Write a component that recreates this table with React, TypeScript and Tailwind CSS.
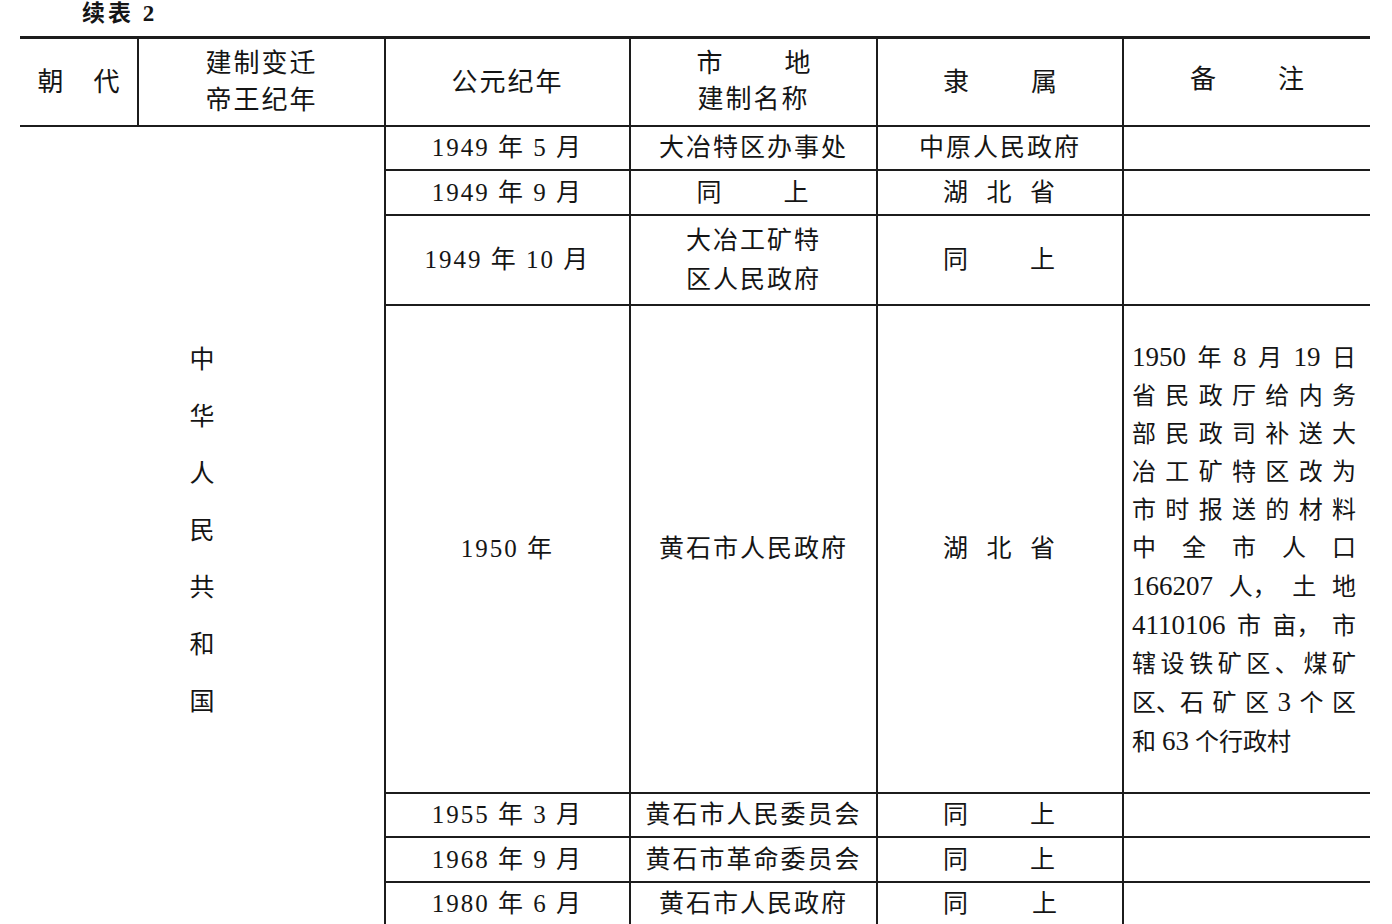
import React from "react";

const FONT = "'Liberation Serif', 'Noto Sans CJK SC', serif";

function Spread({ items, className }: { items: string[]; className: string }) {
  return (
    <div className={"flex justify-between items-baseline " + className}>
      {items.map((t, i) => (
        <span key={i} className={/^\d+$/.test(t) ? "text-[27px]" : ""}>
          {t}
        </span>
      ))}
    </div>
  );
}

const remarkLines: string[][] = [
  ["1950", "年", "8", "月", "19", "日"],
  "省民政厅给内务".split(""),
  "部民政司补送大".split(""),
  "冶工矿特区改为".split(""),
  "市时报送的材料".split(""),
  "中全市人口".split(""),
  ["166207", "人，", "土", "地"],
  ["4110106", "市", "亩，", "市"],
  "辖设铁矿区、煤矿".split(""),
  ["区、石", "矿", "区", "3", "个", "区"],
];

export default function App() {
  const cell = "flex items-center justify-center border-[#1c1c1c]";
  const data = cell + " border-b-2 border-r-2 text-[25px] tracking-[2px]";
  const dataLast = cell + " border-b-2 text-[25px]";
  return (
    <div
      className="w-[1392px] h-[924px] overflow-hidden bg-white text-[#151515]"
      style={{ fontFamily: FONT }}
    >
      <div className="h-[36px] pl-[82px] text-[23px] font-bold leading-[28px] tracking-[3px]">续表 2</div>
      <div className="ml-[20px] w-[1350px] border-t-[3px] border-[#1c1c1c] grid grid-cols-[119px_247px_245px_247px_246px_246px] grid-rows-[88px_44px_45px_90px_488px_44px_45px_50px]">
        {/* header */}
        <div className={cell + " border-b-2 border-r-2 text-[26px] gap-[30px]"}>
          <span>朝</span>
          <span>代</span>
        </div>
        <div className={cell + " border-b-2 border-r-2 flex-col text-[26px] leading-[37px] tracking-[2px]"}>
          <span>建制变迁</span>
          <span>帝王纪年</span>
        </div>
        <div className={cell + " border-b-2 border-r-2 text-[26px] tracking-[2px]"}>公元纪年</div>
        <div className={cell + " border-b-2 border-r-2 flex-col text-[26px] leading-[36px]"}>
          <Spread items={["市", "地"]} className="w-[114px]" />
          <span className="tracking-[2px]">建制名称</span>
        </div>
        <div className={cell + " border-b-2 border-r-2 text-[26px]"}>
          <Spread items={["隶", "属"]} className="w-[114px]" />
        </div>
        <div className={cell + " border-b-2 text-[26px] pb-[6px]"}>
          <Spread items={["备", "注"]} className="w-[114px]" />
        </div>

        {/* merged left */}
        <div className={cell + " col-span-2 row-span-7 border-r-2 flex-col text-[25px] leading-[57px]"}>
          {"中华人民共和国".split("").map((c, i) => (
            <span key={i}>{c}</span>
          ))}
        </div>

        {/* row 1 */}
        <div className={data}>1949 年 5 月</div>
        <div className={data}>大冶特区办事处</div>
        <div className={data}>中原人民政府</div>
        <div className={dataLast}></div>

        {/* row 2 */}
        <div className={data}>1949 年 9 月</div>
        <div className={data}>
          <Spread items={["同", "上"]} className="w-[114px]" />
        </div>
        <div className={data}>
          <Spread items={["湖", "北", "省"]} className="w-[114px]" />
        </div>
        <div className={dataLast}></div>

        {/* row 3 */}
        <div className={data}>1949 年 10 月</div>
        <div className={data + " flex-col leading-[39px]"}>
          <span>大冶工矿特</span>
          <span>区人民政府</span>
        </div>
        <div className={data}>
          <Spread items={["同", "上"]} className="w-[114px]" />
        </div>
        <div className={dataLast}></div>

        {/* row 4 */}
        <div className={data}>1950 年</div>
        <div className={data}>黄石市人民政府</div>
        <div className={data}>
          <Spread items={["湖", "北", "省"]} className="w-[114px]" />
        </div>
        <div className={"flex flex-col justify-center border-b-2 border-[#1c1c1c] pl-[8px] text-[24px] leading-[38px]"}>
          <div className="w-[224px]">
            {remarkLines.map((l, i) => (
              <Spread key={i} items={l} className="" />
            ))}
            <div>
              和 <span className="text-[27px]">63</span> 个行政村
            </div>
          </div>
        </div>

        {/* row 5 */}
        <div className={data}>1955 年 3 月</div>
        <div className={data + " tracking-[1px]"}>黄石市人民委员会</div>
        <div className={data}>
          <Spread items={["同", "上"]} className="w-[114px]" />
        </div>
        <div className={dataLast}></div>

        {/* row 6 */}
        <div className={data}>1968 年 9 月</div>
        <div className={data + " tracking-[1px]"}>黄石市革命委员会</div>
        <div className={data}>
          <Spread items={["同", "上"]} className="w-[114px]" />
        </div>
        <div className={dataLast}></div>

        {/* row 7 */}
        <div className={cell + " border-r-2 text-[25px] tracking-[2px] pb-[8px]"}>1980 年 6 月</div>
        <div className={cell + " border-r-2 text-[25px] tracking-[2px] pb-[8px]"}>黄石市人民政府</div>
        <div className={cell + " border-r-2 text-[25px] pb-[8px]"}>
          <Spread items={["同", "上"]} className="w-[114px]" />
        </div>
        <div></div>
      </div>
    </div>
  );
}
